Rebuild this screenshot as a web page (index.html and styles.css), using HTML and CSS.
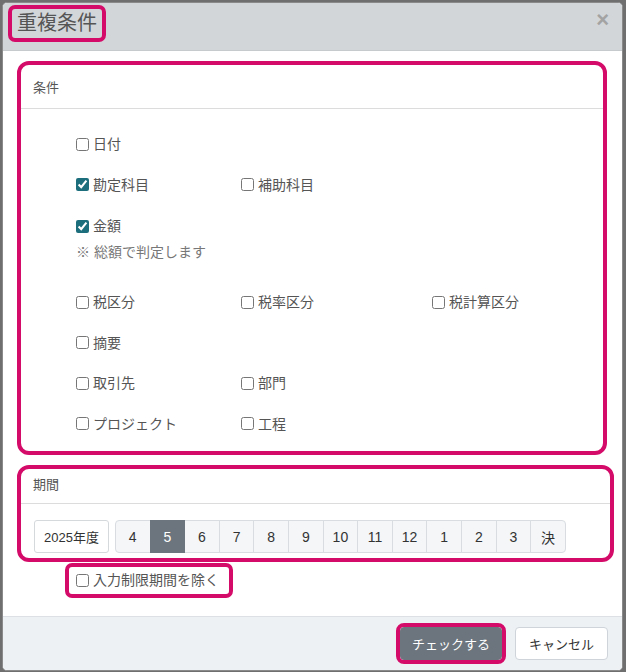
FILE: index.html
```html
<!DOCTYPE html>
<html lang="ja">
<head>
  <meta charset="UTF-8" />
  <meta name="viewport" content="width=device-width, initial-scale=1" />
  <title>重複条件</title>
  <link rel="stylesheet" href="styles.css">
</head>
<body>

  <div class="modal">
    <div class="modal-header">
      <h4 class="modal-title">重複条件</h4>
      <button class="close" type="button">×</button>
    </div>

    <div class="modal-body">
      <!-- 条件 -->
      <div class="card card-cond">
        <div class="card-header">条件</div>
        <div class="card-body conds">
          <div class="row">
            <label class="chk"><input type="checkbox">日付</label>
          </div>
          <div class="row">
            <label class="chk"><input type="checkbox" checked>勘定科目</label>
            <label class="chk"><input type="checkbox">補助科目</label>
          </div>
          <div class="row amount">
            <label class="chk"><input type="checkbox" checked>金額</label>
            <div class="note">※ 総額で判定します</div>
          </div>
          <div class="row">
            <label class="chk"><input type="checkbox">税区分</label>
            <label class="chk"><input type="checkbox">税率区分</label>
            <label class="chk"><input type="checkbox">税計算区分</label>
          </div>
          <div class="row">
            <label class="chk"><input type="checkbox">摘要</label>
          </div>
          <div class="row">
            <label class="chk"><input type="checkbox">取引先</label>
            <label class="chk"><input type="checkbox">部門</label>
          </div>
          <div class="row">
            <label class="chk"><input type="checkbox">プロジェクト</label>
            <label class="chk"><input type="checkbox">工程</label>
          </div>
        </div>
      </div>

      <!-- 期間 -->
      <div class="card card-period">
        <div class="card-header">期間</div>
        <div class="card-body period">
          <button class="btn-year" type="button">2025年度</button>
          <div class="btn-group">
            <button type="button">4</button>
            <button type="button" class="active">5</button>
            <button type="button">6</button>
            <button type="button">7</button>
            <button type="button">8</button>
            <button type="button">9</button>
            <button type="button">10</button>
            <button type="button">11</button>
            <button type="button">12</button>
            <button type="button">1</button>
            <button type="button">2</button>
            <button type="button">3</button>
            <button type="button">決</button>
          </div>
        </div>
      </div>

      <div class="exclude-wrap">
        <label class="chk exclude"><input type="checkbox">入力制限期間を除く</label>
      </div>
    </div>

    <div class="modal-footer">
      <button class="btn btn-check" type="button">チェックする</button>
      <button class="btn btn-cancel" type="button">キャンセル</button>
    </div>
  </div>

</body>
</html>
```

FILE: styles.css
```css
body {
  margin: 0;
  background-color: #6f6f6f;
  font-family: "Liberation Sans", "Noto Sans CJK JP", sans-serif;
  font-size: 14px;
  color: #555;
}

.modal {
  margin: 2px 3px 0 2px;
  height: 669px;
  box-sizing: border-box;
  border: 1px solid #8a8a8a;
  border-radius: 5px;
  background-color: #fff;
  display: flex;
  flex-direction: column;
  overflow: hidden;
}

/* header */
.modal-header {
  height: 48px;
  box-sizing: border-box;
  background-color: #d2d6d9;
  border-bottom: 1px solid #c6cacd;
  display: flex;
  justify-content: space-between;
  align-items: flex-start;
  padding: 2px 13px 0 5px;
}

.modal-title {
  margin: 0;
  padding: 0 5px;
  font-size: 20px;
  font-weight: normal;
  line-height: 29px;
  color: #555;
  border: 4px solid #d40b68;
  border-radius: 7px;
}

.close {
  margin: 0;
  padding: 0;
  border: 0;
  background: none;
  font-family: "Liberation Sans", sans-serif;
  font-size: 22px;
  font-weight: bold;
  line-height: 30px;
  color: #a3a3a3;
}

/* body */
.modal-body {
  flex: 1;
  padding: 10px 8px 0 14px;
}

.card {
  box-sizing: border-box;
  border: 4px solid #d40b68;
  border-radius: 12px;
}

.card-cond {
  width: 590px;
}

.card-period {
  width: 597px;
  margin-top: 10px;
}

.card-header {
  box-sizing: border-box;
  display: flex;
  align-items: center;
  padding-left: 12px;
  font-size: 13px;
  color: #555;
  border-bottom: 1px solid #dcdcdc;
}

.card-cond .card-header {
  height: 44px;
}

.card-period .card-header {
  height: 35px;
  padding-bottom: 6px;
}

.conds {
  padding: 15px 0 7px 55px;
}

.row {
  display: grid;
  grid-template-columns: 165px 191px auto;
  align-items: center;
  height: 40.5px;
}

.row.amount {
  display: block;
  height: auto;
  padding: 11px 0 20px;
}

.chk {
  display: inline-flex;
  align-items: center;
  gap: 4px;
  line-height: 20px;
  color: #555;
}

.chk input {
  margin: 0;
  width: 13px;
  height: 13px;
  accent-color: #1d6e7d;
}

.note {
  margin-top: 6px;
  line-height: 20px;
  color: #777;
}

/* period */
.period {
  display: flex;
  align-items: center;
  gap: 6px;
  padding: 16px 0 5px 13px;
}

.btn-year {
  height: 33px;
  padding: 0 9px;
  border: 1px solid #d6d9dc;
  border-radius: 3px;
  background-color: #fff;
  font-family: inherit;
  font-size: 13px;
  color: #333;
}

.btn-group {
  display: flex;
  width: 451px;
  height: 33px;
}

.btn-group button {
  flex: 1 1 0;
  margin-left: -1px;
  padding: 0;
  border: 1px solid #d9dde1;
  background-color: #f4f6f8;
  font-family: inherit;
  font-size: 14px;
  color: #333;
}

.btn-group button:first-child {
  margin-left: 0;
  border-radius: 4px 0 0 4px;
}

.btn-group button:last-child {
  border-radius: 0 4px 4px 0;
}

.btn-group button.active {
  position: relative;
  background-color: #6c757d;
  border-color: #6c757d;
  color: #fff;
}

.exclude-wrap {
  margin: 1px 0 0 48px;
}

.exclude {
  padding: 0 10px 0 7px;
  line-height: 27px;
  border: 4px solid #d40b68;
  border-radius: 7px;
}

/* footer */
.modal-footer {
  display: flex;
  justify-content: flex-end;
  gap: 13px;
  padding: 10px 14px;
  background-color: #eef1f4;
  border-top: 1px solid #dde1e5;
}

.btn {
  height: 33px;
  border: 1px solid;
  border-radius: 4px;
  font-family: inherit;
  font-size: 13px;
}

.btn-check {
  padding: 0 11px;
  background-color: #6c757d;
  border-color: #6c757d;
  color: #fff;
  outline: 4px solid #d40b68;
}

.btn-cancel {
  padding: 0 13px;
  background-color: #fff;
  border-color: #ced4da;
  color: #333;
}
```
